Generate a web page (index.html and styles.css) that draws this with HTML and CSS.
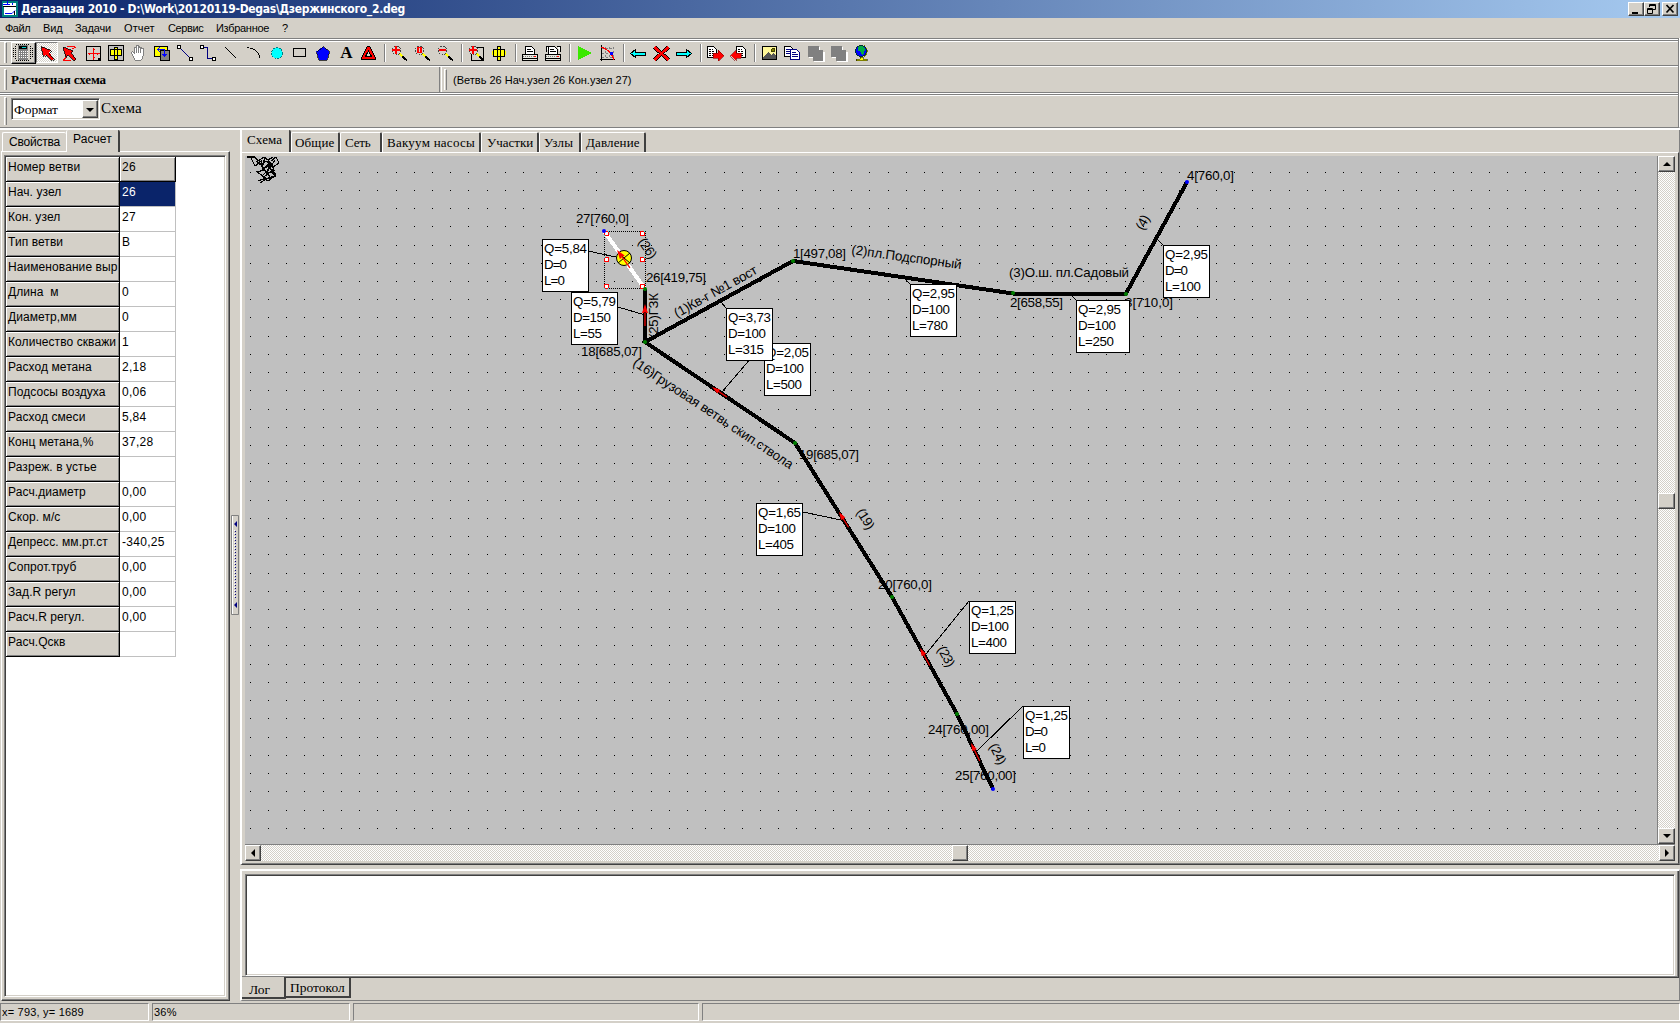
FILE: index.html
```html
<!DOCTYPE html>
<html lang="ru">
<head>
<meta charset="utf-8">
<title>Дегазация 2010</title>
<link rel="stylesheet" href="styles.css">
</head>
<body>
<header class="titlebar">
  <svg class="app-icon" width="16" height="16" viewBox="0 0 16 16"><path fill="#008080" d="M0 0h16v16H0z"/><path fill="#fff" d="M1 2h13v3H1zM2 6h12v8H2z"/><path stroke="#00f" fill="none" d="M5.500 0v4M1 3.500h7M10.500 2v2M3 12.500h7l3-3"/><path stroke="#000" d="M1 5.500h13M12.500 10v4"/></svg>
  <span class="title">Дегазация 2010 - D:\Work\20120119-Degas\Дзержинского_2.deg</span>
  <div class="winbtns">
    <span class="winbtn"><svg width="14" height="12" viewBox="0 0 14 12"><path d="M3 9h6v2H3z"/></svg></span>
    <span class="winbtn"><svg width="14" height="12" viewBox="0 0 14 12"><path fill="none" stroke="#000" d="M4.500 4V1.500h6v5H8M2.500 5.500h5v5h-5zM4 2.500h7M2 6.500h6"/></svg></span>
    <span class="winbtn close"><svg width="14" height="12" viewBox="0 0 14 12"><path fill="none" stroke="#000" stroke-width="1.700" d="M3.500 2l7 7.500M10.500 2l-7 7.500"/></svg></span>
  </div>
</header>
<nav class="menubar">
  <span class="m1">Файл</span><span class="m2">Вид</span><span class="m3">Задачи</span><span class="m4">Отчет</span><span class="m5">Сервис</span><span class="m6">Избранное</span><span>?</span>
</nav>
<section class="rebar">
  <div class="etch4"></div>
  <div class="band toolbar">
    <i class="grip"></i>
    <span class="tb calc"><svg width="22" height="19" viewBox="0 0 22 19"><path fill="none" stroke="#000" stroke-dasharray="1 1" d="M3.500 3v13M18.500 3v13M1.500 5v10M20.500 5v10M4 1.500h14M4 17.500h14"/><path d="M6 2h10v15H6z" fill="#808080"/><path d="M7 3h8v3H7z"/><path stroke="#0cc" d="M10 4.500h4"/><path stroke="#fff" stroke-dasharray="1 1" d="M7 8.500h9M7 10.500h9M7 12.500h9M7 14.500h9"/></svg></span>
    <span class="tb pressed"><svg width="20" height="20" viewBox="0 0 20 20"><path fill="red" stroke="#000" stroke-width=".8" d="M4 3.500l10 4-2 2 5 6-2 2-6-6-2 2.500z"/></svg></span>
    <svg class="ic" viewBox="0 0 23 22"><path fill="red" stroke="#000" stroke-width=".8" d="M5 5l10 4-2 2 5 6-2 2-6-6-2 2.500z"/><path stroke="red" fill="none" d="M9 4.500h8M14.500 7l3-2M5 18.500h8M5 18.500l3-3"/></svg>
    <svg class="ic" viewBox="0 0 23 22"><path fill="none" stroke="#000" d="M5.500 4.500h14v14h-14z"/><path d="M17 16h3v3h-3z"/><path fill="none" stroke="red" d="M12.500 6v12M7 11.500h12M11.500 7.500h2M11.500 15.500h2M8.500 10.500v2M16.500 10.500v2"/></svg>
    <svg class="ic" viewBox="0 0 23 22"><path fill="#c0c0c0" stroke="#000" d="M4.500 3.500h15v15h-15z"/><path fill="#ff0" stroke="#000" d="M10.500 5.500h3v12h-3zM6.500 7.500h11v6h-11z"/><path stroke="#000" d="M10.500 7v7M13.500 7v7"/></svg>
    <svg class="ic" viewBox="0 0 23 22"><path fill="#fff" stroke="#808080" d="M8.500 18.500l-3-5-1-3 1-1 2 2v-6h2V4l2-.500 1 1.500 2 0v1l2 .500v6l-1 4-2 2z"/><path stroke="#808080" fill="none" d="M9.500 5v6M11.500 4v7M13.500 5v6"/></svg>
    <svg class="ic" viewBox="0 0 23 22"><path fill="#ff0" stroke="#000" d="M4.500 4.500h13v10h-13z"/><path fill="#808080" stroke="#000" d="M10.500 8.500h9v10h-9z"/><path stroke="#00f" fill="none" d="M8 7.500h7M14.500 7v8M12.500 12l2 2 2-2M10 5l-2 2.500 2 2.500"/></svg>
    <svg class="ic" viewBox="0 0 23 22"><path stroke="#000080" d="M7 6l10 10"/><path fill="#fff" stroke="#000" d="M4.500 3.500h3v3h-3zM16.500 15.500h3v3h-3z"/></svg>
    <svg class="ic" viewBox="0 0 23 22"><path stroke="#000080" fill="none" d="M7 5.500h4.500v11H17"/><path fill="#fff" stroke="#000" d="M4.500 3.500h3v3h-3zM16.500 15.500h3v3h-3z"/></svg>
    <svg class="ic" viewBox="0 0 23 22"><path stroke="#000" d="M6 5l11 11"/></svg>
    <svg class="ic" viewBox="0 0 23 22"><path stroke="#000" fill="none" d="M5 5.500q11 1 13 10.500"/></svg>
    <svg class="ic" viewBox="0 0 23 22"><circle cx="12" cy="11" r="5.500" fill="#0ff" stroke="#008080" stroke-dasharray="2 1"/></svg>
    <svg class="ic" viewBox="0 0 23 22"><path stroke="#000" fill="none" d="M5.500 6.500h12v8h-12z"/></svg>
    <svg class="ic" viewBox="0 0 23 22"><path fill="#00f" stroke="#000" stroke-width=".7" d="M12 4.500l6.500 5-2.500 8.500H8L5.500 9.500z"/></svg>
    <span class="ic letter">A</span>
    <svg class="ic" viewBox="0 0 23 22"><path d="M10 4h3l6 12v2H4v-2z"/><path fill="red" d="M10.500 5h2l5.500 11v1H5v-1z"/><path d="M11.500 8l4 7h-8z"/><path fill="#d4d0c8" d="M11.500 10l2.200 4H9.300z"/></svg>
    <i class="sep"></i>
    <svg class="ic" viewBox="0 0 23 22"><use href="#lens"/><path stroke="red" stroke-width="2" d="M4 8h8M8 4v8"/></svg>
    <svg class="ic" viewBox="0 0 23 22"><use href="#lens"/><path stroke="red" fill="none" stroke-width="1.500" d="M7 5.500h3v5H7z"/></svg>
    <svg class="ic" viewBox="0 0 23 22"><use href="#lens"/><path stroke="red" stroke-width="2" d="M5 8h7"/></svg>
    <i class="sep"></i>
    <svg class="ic" viewBox="0 0 23 22"><path fill="none" stroke="#000" d="M6.500 5.500h12v13h-12z"/><use href="#lens"/><path stroke="red" stroke-width="2" d="M4 8h8M8 4v8"/></svg>
    <svg class="ic" viewBox="0 0 23 22"><path fill="#ff0" stroke="#000" d="M9.500 4.500h3v14h-3zM5.500 7.500h11v7h-11z"/><path stroke="#ff0" d="M4.500 9v4M17.500 9v4"/><path stroke="#000" d="M9.500 7v8M12.500 7v8"/></svg>
    <i class="sep"></i>
    <svg class="ic" viewBox="0 0 23 22"><use href="#printer"/></svg>
    <svg class="ic" viewBox="0 0 23 22"><path fill="#fff" stroke="#000" d="M4.500 10V4.500h3M15 4.500h3V10"/><use href="#printer"/></svg>
    <i class="sep"></i>
    <svg class="ic" viewBox="0 0 23 22"><path fill="#3be800" d="M5 4l14.500 7L5 18z"/></svg>
    <svg class="ic" viewBox="0 0 23 22"><path stroke="#808080" stroke-dasharray="2 2" fill="none" d="M6 6.500h12M6 11.500h12M6 15.500h12M9.500 5v12M13.500 5v12M17.500 5v12"/><path stroke="#000" fill="none" d="M5.500 3v15.500M4 17.500h15"/><path stroke="red" stroke-width="1.300" fill="none" d="M5 5q10 3 13 13"/><path fill="#00f" d="M14 10h3v3h-3z"/></svg>
    <i class="sep"></i>
    <svg class="ic" viewBox="0 0 23 22"><path fill="#0ff" stroke="#000" d="M3.500 11.500l5-4v2.500h10v3h-10v2.500z"/></svg>
    <svg class="ic" viewBox="0 0 23 22"><path stroke="#000" stroke-width="4" d="M4.500 5l14 13M18.500 5l-14 13"/><path stroke="red" stroke-width="2.600" d="M4.500 5l14 13M18.500 5l-14 13"/></svg>
    <svg class="ic" viewBox="0 0 23 22"><path fill="#0ff" stroke="#000" d="M18.500 11.500l-5-4v2.500h-10v3h10v2.500z"/></svg>
    <i class="sep"></i>
    <svg class="ic" viewBox="0 0 23 22"><path fill="#fff" stroke="#000" d="M3.500 4.500h6l3 3v8h-9z"/><path stroke="#000" stroke-dasharray="2 1" d="M5 7.500h4M5 9.500h5M5 11.500h5M5 13.500h4"/><path fill="red" stroke="#800000" stroke-width=".6" d="M9 11h5V8l5.500 5.500L14 19v-3H9z"/></svg>
    <svg class="ic" viewBox="0 0 23 22"><path fill="#fff" stroke="#000" d="M9.500 4.500h6l3 3v8h-9z"/><path stroke="#000" stroke-dasharray="2 1" d="M11 7.500h4M11 9.500h6M11 11.500h6M11 13.500h6"/><path fill="red" stroke="#800000" stroke-width=".6" d="M14 11H9V8l-5.500 5.500L9 19v-3h5z"/></svg>
    <i class="sep"></i>
    <svg class="ic" viewBox="0 0 23 22"><path fill="#fff799" stroke="#000" stroke-width="1.200" d="M4.500 4.500h14v13h-14z"/><path fill="#555" d="M5 15l5-5 3 3 2-2 3 3v3H5z"/><circle cx="15" cy="8" r="2" fill="#808000" stroke="#000" stroke-width=".5"/></svg>
    <svg class="ic" viewBox="0 0 23 22"><path fill="#fff" stroke="#000" d="M3.500 4.500h6l2 2v8h-8z"/><path fill="#fff" stroke="#000080" d="M9.500 7.500h6l3 3v7h-9z"/><path stroke="#000080" d="M5 7.500h4M5 9.500h4M5 11.500h4M11 10.500h4M11 12.500h6M11 14.500h6"/></svg>
    <svg class="ic" viewBox="0 0 23 22"><use href="#ghost"/></svg>
    <svg class="ic" viewBox="0 0 23 22"><use href="#ghost"/></svg>
    <svg class="ic" viewBox="0 0 23 22"><path fill="none" stroke="#808000" stroke-width="1.500" d="M14 4q6 5 0 11"/><circle cx="11" cy="9" r="5.500" fill="#00f" stroke="#033"/><path fill="#0a4" d="M9 4l4 0 2 3-1 4-2 2-1-3-3-1 0-3z"/><path fill="#ff0" stroke="#000" stroke-width=".5" d="M10 15h3v2h4v1.500H6V17h4z"/></svg>
  </div>
  <div class="etch2"></div>
  <div class="band row2">
    <div class="cap"><i class="grip"></i><b>Расчетная схема</b></div>
    <i class="vsplit"></i>
    <div class="info"><i class="grip"></i><span>(Ветвь 26 Нач.узел 26 Кон.узел 27)</span></div>
  </div>
  <div class="etch4"></div>
  <div class="band row3">
    <i class="grip"></i>
    <div class="combo"><span>Формат</span><i class="drop"></i></div>
    <span class="scheme">Схема</span>
  </div>
</section>

<main class="work">
  <aside class="left">
    <div class="ltabs"><span class="ltab off">Свойства</span><span class="ltab on">Расчет</span></div>
    <div class="lbody">
      <div class="gridbox">
        <table class="grid">
          <tr class="head"><th>Номер ветви</th><td>26</td></tr>
          <tr class="sel"><th>Нач. узел</th><td>26</td></tr>
          <tr><th>Кон. узел</th><td>27</td></tr>
          <tr><th>Тип ветви</th><td>В</td></tr>
          <tr><th>Наименование выр</th><td></td></tr>
          <tr><th>Длина&nbsp; м</th><td>0</td></tr>
          <tr><th>Диаметр,мм</th><td>0</td></tr>
          <tr><th>Количество скважи</th><td>1</td></tr>
          <tr><th>Расход метана</th><td>2,18</td></tr>
          <tr><th>Подсосы воздуха</th><td>0,06</td></tr>
          <tr><th>Расход смеси</th><td>5,84</td></tr>
          <tr><th>Конц метана,%</th><td>37,28</td></tr>
          <tr><th>Разреж. в устье</th><td></td></tr>
          <tr><th>Расч.диаметр</th><td>0,00</td></tr>
          <tr><th>Скор. м/с</th><td>0,00</td></tr>
          <tr><th>Депресс. мм.рт.ст</th><td>-340,25</td></tr>
          <tr><th>Сопрот.труб</th><td>0,00</td></tr>
          <tr><th>Зад.R регул</th><td>0,00</td></tr>
          <tr><th>Расч.R регул.</th><td>0,00</td></tr>
          <tr><th>Расч.Qскв</th><td></td></tr>
        </table>
      </div>
    </div>
  </aside>
  <div class="splitter"><svg width="8" height="100" viewBox="0 0 8 100"><path fill="#d4d0c8" stroke="#808080" d="M.5.500h7v99h-7z"/><path stroke="#fff" d="M1.500 1v98"/><path fill="#000080" d="M6 6v6L3 9zM6 87v6L3 90z"/><path stroke="#000080" stroke-dasharray="1 2" d="M4.500 16v68"/><path stroke="#fff" stroke-dasharray="1 2" d="M3.500 15v68"/></svg></div>
  <section class="right">
    <div class="pages">
      <div class="rtabs">
        <span class="rtab on t1">Схема</span><span class="rtab t2">Общие</span><span class="rtab t3">Сеть</span><span class="rtab t4">Вакуум насосы</span><span class="rtab t5">Участки</span><span class="rtab t6">Узлы</span><span class="rtab t7">Давление</span>
      </div>
      <div class="pbody">
        <div class="view">
          <svg class="canvas" width="1412" height="688" viewBox="245 156 1412 688">
            <path id="dots" fill="#000"/>
            <g fill="none" stroke="#000" stroke-width="1.300" shape-rendering="crispEdges"><path d="M247 157h8l3 4 6-4 4 3 5-3M251 158l4 8 6-5 2 9 7-8-3 12 8-4M256 161l5 3 3 6-7 2 9 6-8 3M271 161l5-4 3 6-6 4-4-3M259 165l8-4 7 8-9 7M262 176l8-8 6 7-8 6zM260 183l6-4 9-3-4-5M275 160l-8 12 4 7M265 158l-3 9 7 8M268 160l4 5-9 3"/></g>
            <g>
              <text x="576" y="223" textLength="53">27[760,0]</text>
              <text x="646" y="282" textLength="60">26[419,75]</text>
              <text x="581" y="356" textLength="61">18[685,07]</text>
              <text x="793" y="258" textLength="53">1[497,08]</text>
              <text x="1010" y="307" textLength="53">2[658,55]</text>
              <text x="1125" y="307" textLength="48">3[710,0]</text>
              <text x="1187" y="180" textLength="47">4[760,0]</text>
              <text x="799" y="459" textLength="60">19[685,07]</text>
              <text x="878" y="589" textLength="54">20[760,0]</text>
              <text x="928" y="734" textLength="61">24[760,00]</text>
              <text x="955" y="780" textLength="61">25[760,00]</text>
            </g>
            <g stroke="#000" stroke-width="4" fill="none" shape-rendering="crispEdges"><path d="M645 289v53M793 261L645 342L795 443L892 597L957 714L993 789M793 261L1013 293.500H1126L1187 182"/><path stroke="#fff" d="M604 231l41 58"/></g>
            <g>
              <text transform="translate(636 243) rotate(55)" textLength="22" y="-2">(26)</text>
              <text transform="translate(658 338) rotate(-90)" textLength="45">(25)ГЗК</text>
              <text transform="translate(677 318) rotate(-29)" textLength="93">(1)Кв-г №1 вост</text>
              <text transform="translate(851 254) rotate(7.800)" textLength="111">(2)пл.Подспорный</text>
              <text x="1009" y="277" textLength="120">(3)О.ш. пл.Садовый</text>
              <text transform="translate(1143 231) rotate(-61)" textLength="15">(4)</text>
              <text transform="translate(632 365) rotate(33.500)" textLength="189">(16)Грузовая ветвь скип.ствола</text>
              <text transform="translate(856 512) rotate(58)" textLength="22">(19)</text>
              <text transform="translate(937 649) rotate(61)" textLength="22">(23)</text>
              <text transform="translate(989 746) rotate(64)" textLength="22">(24)</text>
            </g>
            <g class="thin"><path d="M588 251l37 8M618 307l27 8M726 308l-5-6M764 343l-42 49M910 284l-5-5M1076 300l-6-6M1163 245l-7-7M803 512l38 8M969 601l-43 53M1023 706l-47 46"/></g>
            <g fill="#ff0" stroke="#000"><circle cx="624" cy="258" r="7.500"/><path d="M618 253l12 10M618 263l12-10"/></g>
            <g fill="red">
              <path d="M0 0l-3 9h6zM-.6 8h1.200v14h-1.200z" transform="translate(645 304)"/>
              <path d="M0 0l-3 9h6zM-.6 8h1.200v14h-1.200z" transform="translate(617 250) rotate(-36)"/>
              <path d="M0 0l-2.500 8h5zM-.6 8h1.200v10h-1.200z" transform="translate(712 387) rotate(-56)"/>
              <path d="M0 0l-2.500 8h5zM-.6 8h1.200v10h-1.200z" transform="translate(839 512) rotate(-32)"/>
              <path d="M0 0l-2.500 8h5zM-.6 8h1.200v12h-1.200z" transform="translate(920 648) rotate(-29)"/>
              <path d="M0 0l-2.500 8h5zM-.6 8h1.200v12h-1.200z" transform="translate(971 743) rotate(-26)"/>
            </g>
            <path fill="none" stroke="#000" stroke-dasharray="1 1" shape-rendering="crispEdges" d="M604.500 231.500h41v57h-41z"/>
            <g class="handles"><path d="M604.500 231.500h4v4h-4zM640.500 231.500h4v4h-4zM604.500 257.500h4v4h-4zM640.500 257.500h4v4h-4zM604.500 284.500h4v4h-4zM640.500 284.500h4v4h-4z"/></g>
            <path fill="#0ff" d="M608 231h1v1h-1zM644 231h1v1h-1zM604 288h1v1h-1zM604 257h1v1h-1zM608 288h1v1h-1zM644 257h1v1h-1zM604 235h1v1h-1z"/>
            <g fill="#008000"><circle cx="645" cy="289" r="2"/><circle cx="645" cy="342" r="2"/><circle cx="793" cy="261" r="2"/><circle cx="1013" cy="293" r="2"/><circle cx="1126" cy="294" r="2"/><circle cx="795" cy="443" r="2"/><circle cx="892" cy="597" r="2"/><circle cx="957" cy="714" r="2"/></g>
            <g fill="#00f"><circle cx="604" cy="231" r="2"/><circle cx="1187" cy="182" r="2"/><circle cx="993" cy="789" r="2"/></g>
            <g class="boxes">
              <g transform="translate(542 239)"><rect x=".5" y=".5" width="46" height="52"/><text x="2" y="14" textLength="43">Q=5,84</text><text x="2" y="30" textLength="23">D=0</text><text x="2" y="46" textLength="21">L=0</text></g>
              <g transform="translate(571 292)"><rect x=".5" y=".5" width="46" height="52"/><text x="2" y="14" textLength="43">Q=5,79</text><text x="2" y="30" textLength="38">D=150</text><text x="2" y="46" textLength="29">L=55</text></g>
              <g transform="translate(764 343)"><rect x=".5" y=".5" width="46" height="52"/><text x="2" y="14" textLength="43">Q=2,05</text><text x="2" y="30" textLength="38">D=100</text><text x="2" y="46" textLength="36">L=500</text></g>
              <g transform="translate(726 308)"><rect x=".5" y=".5" width="46" height="52"/><text x="2" y="14" textLength="43">Q=3,73</text><text x="2" y="30" textLength="38">D=100</text><text x="2" y="46" textLength="36">L=315</text></g>
              <g transform="translate(910 284)"><rect x=".5" y=".5" width="46" height="52"/><text x="2" y="14" textLength="43">Q=2,95</text><text x="2" y="30" textLength="38">D=100</text><text x="2" y="46" textLength="36">L=780</text></g>
              <g transform="translate(1076 300)"><rect x=".5" y=".5" width="53" height="52"/><text x="2" y="14" textLength="43">Q=2,95</text><text x="2" y="30" textLength="38">D=100</text><text x="2" y="46" textLength="36">L=250</text></g>
              <g transform="translate(1163 245)"><rect x=".5" y=".5" width="46" height="52"/><text x="2" y="14" textLength="43">Q=2,95</text><text x="2" y="30" textLength="23">D=0</text><text x="2" y="46" textLength="36">L=100</text></g>
              <g transform="translate(756 503)"><rect x=".5" y=".5" width="46" height="52"/><text x="2" y="14" textLength="43">Q=1,65</text><text x="2" y="30" textLength="38">D=100</text><text x="2" y="46" textLength="36">L=405</text></g>
              <g transform="translate(969 601)"><rect x=".5" y=".5" width="46" height="52"/><text x="2" y="14" textLength="43">Q=1,25</text><text x="2" y="30" textLength="38">D=100</text><text x="2" y="46" textLength="36">L=400</text></g>
              <g transform="translate(1023 706)"><rect x=".5" y=".5" width="46" height="52"/><text x="2" y="14" textLength="43">Q=1,25</text><text x="2" y="30" textLength="23">D=0</text><text x="2" y="46" textLength="21">L=0</text></g>
            </g>
          </svg>
          <div class="vscroll"><i class="sb up"></i><i class="sb thumb"></i><i class="sb down"></i></div>
        </div>
        <div class="hscroll"><i class="sb lf"></i><i class="sb thumb"></i><i class="sb rt"></i></div>
      </div>
    </div>
    <div class="log">
      <div class="lframe"><div class="memo"></div></div>
      <div class="btabs"><span class="btab on">Лог</span><span class="btab off">Протокол</span></div>
    </div>
  </section>
</main>
<footer class="status"><span class="sp s1">x= 793, y= 1689</span><span class="sp s2">36%</span><span class="sp s3"></span><span class="sp s4"></span></footer>

<svg width="0" height="0" class="defs"><defs>
  <g id="lens"><circle cx="8.500" cy="8.500" r="4.500" fill="#d4d0c8" stroke="#444" stroke-dasharray="2 1"/><path stroke="#ff0" stroke-width="2" d="M12 12l3 3"/><path stroke="#000" stroke-width="2" d="M14.500 14.500l4.500 4"/></g>
  <g id="printer"><path fill="#fff" stroke="#000" d="M6.500 12V4.500h6l3 3V12"/><path stroke="#000" d="M8 7.500h4M8 9.500h6"/><path fill="#e8e8e0" stroke="#000" d="M3.500 12.500h15v6h-15z"/><path stroke="#808080" stroke-dasharray="1 1" d="M4 14.500h14"/><path stroke="red" d="M15 14.500h2"/><path stroke="#000" d="M4 16.500h14"/></g>
  <g id="ghost"><path fill="#fff" d="M5 5h11v5h5v10H10v-4H5z"/><path fill="#808080" d="M4 4h11v4h4v11H9v-4H4z"/></g>
</defs></svg>
<script src="grid.js"></script>
</body>
</html>
```
FILE: grid.js
```js
// Snap-grid dots of the scheme canvas
let d = '';
for (let r = 0; r < 37; r++)
  for (let c = 0; c < 77; c++)
    d += `M${Math.floor(250.3 + c * 18.223)} ${Math.floor(172.2 + r * 18.223)}h1v1h-1z`;
document.getElementById('dots').setAttribute('d', d);
```
FILE: styles.css
```css
* { box-sizing: border-box; }
body { margin: 0; width: 1680px; height: 1024px; overflow: hidden; display: flex; flex-direction: column; background: #d4d0c8; color: #000; font: 12px "Liberation Sans", Arial, sans-serif; }
i { display: block; font-style: normal; }
.defs { position: absolute; }
.titlebar { height: 18px; flex: none; display: flex; align-items: center; padding-left: 2px; background: linear-gradient(90deg, #0a246a, #a6caf0); }
.app-icon { display: block; margin-right: 3px; }
.title { color: #fff; font: bold 12px/18px "DejaVu Sans Condensed", "DejaVu Sans", sans-serif; letter-spacing: -.3px; flex: none; }
.winbtns { margin-left: auto; display: flex; padding-right: 2px; }
.winbtn { width: 16px; height: 14px; background: #d4d0c8; border: 1px solid; border-color: #fff #404040 #404040 #fff; box-shadow: inset -1px -1px #808080; }
.winbtn svg { display: block; }
.winbtn.close { margin-left: 2px; }
.menubar { height: 20px; flex: none; display: flex; padding-left: 5px; line-height: 21px; font-size: 11px; letter-spacing: -.15px; white-space: nowrap; }
.m1 { width: 38px; letter-spacing: -.5px; } .m2 { width: 32px; } .m3 { width: 49px; } .m4 { width: 44px; letter-spacing: .1px; } .m5 { width: 48px; letter-spacing: -.4px; } .m6 { width: 66px; letter-spacing: -.3px; }

.rebar { height: 90px; flex: none; border-right: 1px solid #fff; border-bottom: 1px solid #808080; box-shadow: inset -1px 0 #808080; }
.etch4 { height: 4px; margin-right: 1px; background: linear-gradient(#808080 1px, #fff 1px 2px, #808080 2px 3px, #fff 3px); }
.etch2 { height: 2px; margin-right: 1px; background: linear-gradient(#808080 1px, #fff 1px); }
.band { display: flex; padding-left: 4px; }
.grip { width: 3px; height: 21px; flex: none; border-left: 1px solid #fff; border-right: 1px solid #808080; border-top: 1px solid #fff; }
.toolbar { height: 23px; }
.tb { flex: none; height: 22px; }
.tb svg, .ic { display: block; shape-rendering: crispEdges; }
.calc { width: 25px; margin-left: 4px; border: 1px solid; border-color: #fff #000 #000 #fff; box-shadow: inset -1px -1px #808080; }
.pressed { width: 22px; height: 21px; border: 1px solid; border-color: #808080 #fff #fff #808080; background: repeating-conic-gradient(#fff 0 25%, #d4d0c8 0 50%) 0 0 / 2px 2px; }
.ic { width: 23px; height: 22px; flex: none; }
.letter { font: bold 17px/22px "Liberation Serif", serif; text-align: center; padding-left: 2px; }
.sep { width: 8px; height: 18px; flex: none; margin-top: 2px; background: linear-gradient(90deg, transparent 4px, #808080 4px 5px, #fff 5px 6px, transparent 6px); }
.row2 { height: 25px; padding: 0; }
.cap { width: 435px; display: flex; padding: 2px 0 0 4px; }
.cap b { margin-left: 4px; font: bold 13px/22px "Liberation Serif", serif; letter-spacing: -.1px; }
.vsplit { width: 3px; margin-left: 4px; border-left: 1px solid #808080; border-right: 1px solid #fff; }
.info { display: flex; padding: 2px 0 0 2px; font-size: 11px; line-height: 23px; }
.info span { margin-left: 6px; }
.row3 { height: 31px; }
.row3 .grip { height: 28px; margin-top: 1px; }
.combo { width: 89px; height: 22px; margin: 2px 0 0 4px; display: flex; background: #fff; border: 1px solid; border-color: #808080 #fff #fff #808080; box-shadow: inset 1px 1px #404040, inset -1px -1px #d4d0c8; font: 13.5px/20px "Liberation Serif", serif; padding: 1px 1px 1px 2px; }
.drop { width: 16px; margin-left: auto; border: 1px solid; border-color: #fff #404040 #404040 #fff; box-shadow: inset -1px -1px #808080; background: #d4d0c8; position: relative; }
.drop::after { content: ""; position: absolute; left: 3px; top: 7px; border: 4px solid transparent; border-top-color: #000; border-bottom: 0; }
.scheme { font: 15px/24px "Liberation Serif", serif; letter-spacing: .2px; margin-left: 1px; }

.work { flex: none; height: 873px; display: flex; border-top: 2px solid #fff; }
.left { width: 230px; flex: none; display: flex; flex-direction: column; }
.ltabs { height: 21px; display: flex; align-items: flex-end; padding-left: 2px; flex: none; }
.ltab { border: 1px solid #fff; border-bottom: 0; border-radius: 2px 2px 0 0; }
.ltab.off { width: 64px; height: 19px; padding-left: 6px; line-height: 18px; border-right: 0; letter-spacing: -.2px; }
.ltab.on { width: 54px; height: 22px; padding-left: 6px; line-height: 19px; border-right: 2px solid #404040; border-top: 0; background: #d4d0c8; margin-bottom: -1px; position: relative; letter-spacing: .1px; }
.lbody { flex: 1; border: 1px solid #fff; border-right: 1px solid #404040; border-bottom: 1px solid #404040; box-shadow: inset -1px -1px #808080; margin: 0 0 0 1px; padding: 3px 3px 3px 2px; }
.gridbox { height: 100%; background: #fff; border: 1px solid; border-color: #808080 #fff #fff #808080; box-shadow: inset 1px 1px #404040, inset -1px -1px #d4d0c8; padding: 1px 0 0 1px; }
.grid { border-collapse: separate; border-spacing: 0; table-layout: fixed; width: 170px; }
.grid th, .grid td { height: 25px; padding: 0; font-weight: normal; text-align: left; vertical-align: top; line-height: 20px; white-space: nowrap; overflow: hidden; letter-spacing: .08px; }
.grid th { width: 114px; background: #d4d0c8; border-right: 1px solid #000; border-bottom: 1px solid #000; box-shadow: inset 1px 1px #fff, inset -1px -1px #808080; padding-left: 2px; }
.grid td { padding-left: 2px; border-right: 1px solid #c0c0c0; border-bottom: 1px solid #c0c0c0; letter-spacing: .3px; }
.grid .head td { background: #d4d0c8; border-color: #000; box-shadow: inset 1px 1px #fff, inset -1px -1px #808080; }
.grid .sel td { background: #0a246a; color: #fff; }
.splitter { width: 10px; flex: none; padding: 385px 0 0 1px; }
.splitter svg { display: block; }

.right { flex: 1; display: flex; flex-direction: column; font-family: "Liberation Serif", serif; }
.pages { height: 735px; flex: none; display: flex; flex-direction: column; border-left: 2px solid #fff; border-bottom: 1px solid #404040; border-right: 1px solid #808080; }
.rtabs { height: 22px; flex: none; display: flex; align-items: flex-end; font-size: 13px; letter-spacing: .15px; }
.rtab { height: 20px; line-height: 20px; border-top: 1px solid #fff; border-left: 1px solid #fff; border-right: 2px solid #404040; border-radius: 2px 2px 0 0; padding-left: 3px; white-space: nowrap; overflow: hidden; }
.rtab.on { height: 22px; border-left: 0; border-top: 0; padding-left: 5px; }
.t1 { width: 49px; } .t2 { width: 49px; } .t3 { width: 42px; padding-left: 4px; letter-spacing: -.2px; } .t4 { width: 99px; padding-left: 4px; letter-spacing: .25px; } .t5 { width: 58px; padding-left: 5px; letter-spacing: 0; } .t6 { width: 42px; padding-left: 4px; } .t7 { width: 65px; padding-left: 4px; }
.pbody { flex: 1; border-top: 1px solid #fff; border-right: 1px solid #404040; border-bottom: 1px solid #808080; padding: 3px 2px 2px 3px; }
.view { display: flex; height: 688px; }
.canvas { display: block; flex: none; background: #c0c0c0; }
#dots, .handles, .thin { shape-rendering: crispEdges; }
.handles path { fill: #fff; stroke: red; }
.thin path { fill: none; stroke: #000; stroke-width: 1; }
.canvas text { font: 13.3px "Liberation Sans", Arial, sans-serif; }
.boxes rect { fill: #fff; stroke: #000; shape-rendering: crispEdges; }
.vscroll, .hscroll { background: repeating-conic-gradient(#fff 0 25%, #d4d0c8 0 50%) 0 0 / 2px 2px; display: flex; }
.vscroll { width: 18px; flex-direction: column; border-left: 1px solid #808080; }
.hscroll { height: 17px; width: 1430px; border-top: 1px solid #808080; }
.sb { flex: none; width: 16px; height: 16px; background: #d4d0c8; border: 1px solid; border-color: #fff #404040 #404040 #fff; box-shadow: inset -1px -1px #808080; display: flex; align-items: center; justify-content: center; }
.sb::after { border: 4px solid transparent; }
.up::after { content: ""; border-bottom-color: #000; border-top: 0; }
.down::after { content: ""; border-top-color: #000; border-bottom: 0; }
.lf::after { content: ""; border-right-color: #000; border-left: 0; }
.rt::after { content: ""; border-left-color: #000; border-right: 0; }
.vscroll .sb { width: 17px; }
.vscroll .thumb { margin-top: 321px; }
.vscroll .down { margin-top: auto; }
.hscroll .thumb { margin-left: 691px; }
.hscroll .rt { margin-left: auto; }

.log { margin-top: 4px; height: 132px; border-top: 2px solid #fff; border-left: 2px solid #fff; border-bottom: 1px solid #808080; border-right: 1px solid #808080; }
.lframe { height: 107px; padding: 3px 3px 1px 3px; border-right: 1px solid #404040; border-bottom: 1px solid #404040; box-shadow: inset -1px -1px #808080; }
.memo { height: 102px; background: #fff; border: 1px solid; border-color: #808080 #fff #fff #808080; box-shadow: inset 1px 1px #404040, inset -1px -1px #d4d0c8; }
.btabs { display: flex; font-size: 13.5px; align-items: flex-start; }
.btab.on { width: 44px; height: 22px; border-right: 2px solid #404040; border-bottom: 2px solid #404040; line-height: 26px; padding-left: 7px; margin-top: -1px; background: #d4d0c8; position: relative; }
.btab.off { width: 65px; height: 20px; border-right: 2px solid #404040; border-bottom: 2px solid #404040; padding-left: 4px; line-height: 20px; }
.status { flex: none; height: 23px; display: flex; gap: 3px; padding: 2px 0; border-bottom: 1px solid #fff; font-size: 11px; letter-spacing: .2px; }
.sp { height: 18px; border: 1px solid; border-color: #808080 #fff #fff #808080; line-height: 17px; padding-left: 1px; }
.s1 { width: 149px; } .s2 { width: 198px; } .s3 { width: 346px; } .s4 { flex: 1; }
```
